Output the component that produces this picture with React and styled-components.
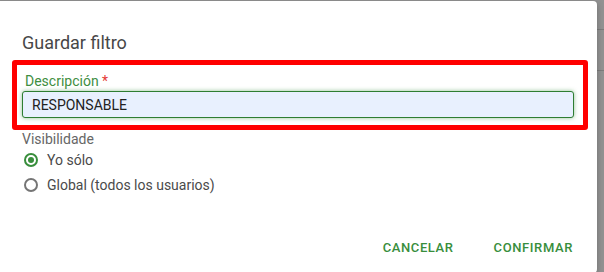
import React from 'react';
import styled, { createGlobalStyle } from 'styled-components';

const GlobalStyle = createGlobalStyle`
  html, body {
    margin: 0;
    padding: 0;
  }
  body {
    font-family: Roboto, "Liberation Sans", Arial, sans-serif;
    overflow: hidden;
  }
`

const Backdrop = styled.div`
  width: 604px;
  height: 272px;
  padding-top: 1px;
  box-sizing: border-box;
  overflow: hidden;
  background:
    linear-gradient(#7c7c7c, #7c7c7c) 0 29px / 100% 1px no-repeat,
    linear-gradient(#7c7c7c, #7c7c7c) 0 70px / 100% 1px no-repeat,
    #929292;
`

const Dialog = styled.section`
  display: flex;
  flex-direction: column;
  width: 601px;
  height: 272px;
  margin-left: -4px;
  box-sizing: border-box;
  padding: 30px 0 8px 26px;
  background: #fff;
  border-radius: 4px;
  box-shadow: 0 2px 6px rgba(0, 0, 0, 0.25);
`

const Title = styled.h2`
  margin: 0;
  font-size: 18px;
  line-height: 24px;
  font-weight: 400;
  color: #474747;
`

const Highlight = styled.div`
  margin: 5px 0 0 -10px;
  width: 576px;
  box-sizing: border-box;
  border: 5px solid #ff0000;
  border-radius: 3px;
  padding: 7.5px 9px 7px 5px;
`

const FieldLabel = styled.label`
  display: block;
  padding-left: 3px;
  font-size: 14px;
  line-height: 16px;
  color: #3e8e41;
`

const Required = styled.span`
  color: #e53935;
`

const Input = styled.input`
  display: block;
  width: 100%;
  height: 27px;
  margin-top: 2.5px;
  box-sizing: border-box;
  padding: 0 9px;
  border: 1px solid #2e7d32;
  border-radius: 3px;
  background: #e8f0fe;
  box-shadow: 0 0 4px rgba(56, 142, 60, 0.55);
  font-family: Roboto, "Liberation Sans", Arial, sans-serif;
  font-size: 14px;
  color: #222;
  outline: none;
`

const GroupLabel = styled.div`
  margin-top: 0.5px;
  font-size: 14px;
  line-height: 16px;
  color: #666;
`

const RadioList = styled.div`
  margin-top: 1px;
  display: flex;
  flex-direction: column;
`

const RadioRow = styled.label`
  display: flex;
  align-items: center;
  gap: 9px;
  height: 25px;
  padding-left: 2px;
  font-size: 14px;
  color: #4a4a4a;
`

const RadioDot = styled.span`
  flex-shrink: 0;
  width: 14px;
  height: 14px;
  box-sizing: border-box;
  border-radius: 50%;
  border: 2px solid ${p => (p.$checked ? '#388e3c' : '#757575')};
  display: flex;
  align-items: center;
  justify-content: center;

  &::after {
    content: '';
    width: 6px;
    height: 6px;
    border-radius: 50%;
    background: ${p => (p.$checked ? '#388e3c' : 'transparent')};
  }
`

const Footer = styled.footer`
  margin-top: auto;
  display: flex;
  justify-content: flex-end;
  gap: 24px;
  padding-right: 16px;
`

const TextButton = styled.button`
  height: 36px;
  padding: 0 8px;
  border: none;
  background: none;
  font-family: Roboto, "Liberation Sans", Arial, sans-serif;
  font-size: 13px;
  font-weight: 500;
  letter-spacing: 0.6px;
  text-transform: uppercase;
  color: #388e3c;
  cursor: pointer;
`

function App() {
  return (
    <Backdrop>
      <GlobalStyle />
      <Dialog>
        <Title>Guardar filtro</Title>
        <Highlight>
          <FieldLabel>Descripción <Required>*</Required></FieldLabel>
          <Input defaultValue="RESPONSABLE" />
        </Highlight>
        <GroupLabel>Visibilidade</GroupLabel>
        <RadioList>
          <RadioRow><RadioDot $checked />Yo sólo</RadioRow>
          <RadioRow><RadioDot />Global (todos los usuarios)</RadioRow>
        </RadioList>
        <Footer>
          <TextButton>Cancelar</TextButton>
          <TextButton>Confirmar</TextButton>
        </Footer>
      </Dialog>
    </Backdrop>
  );
}

export default App;
